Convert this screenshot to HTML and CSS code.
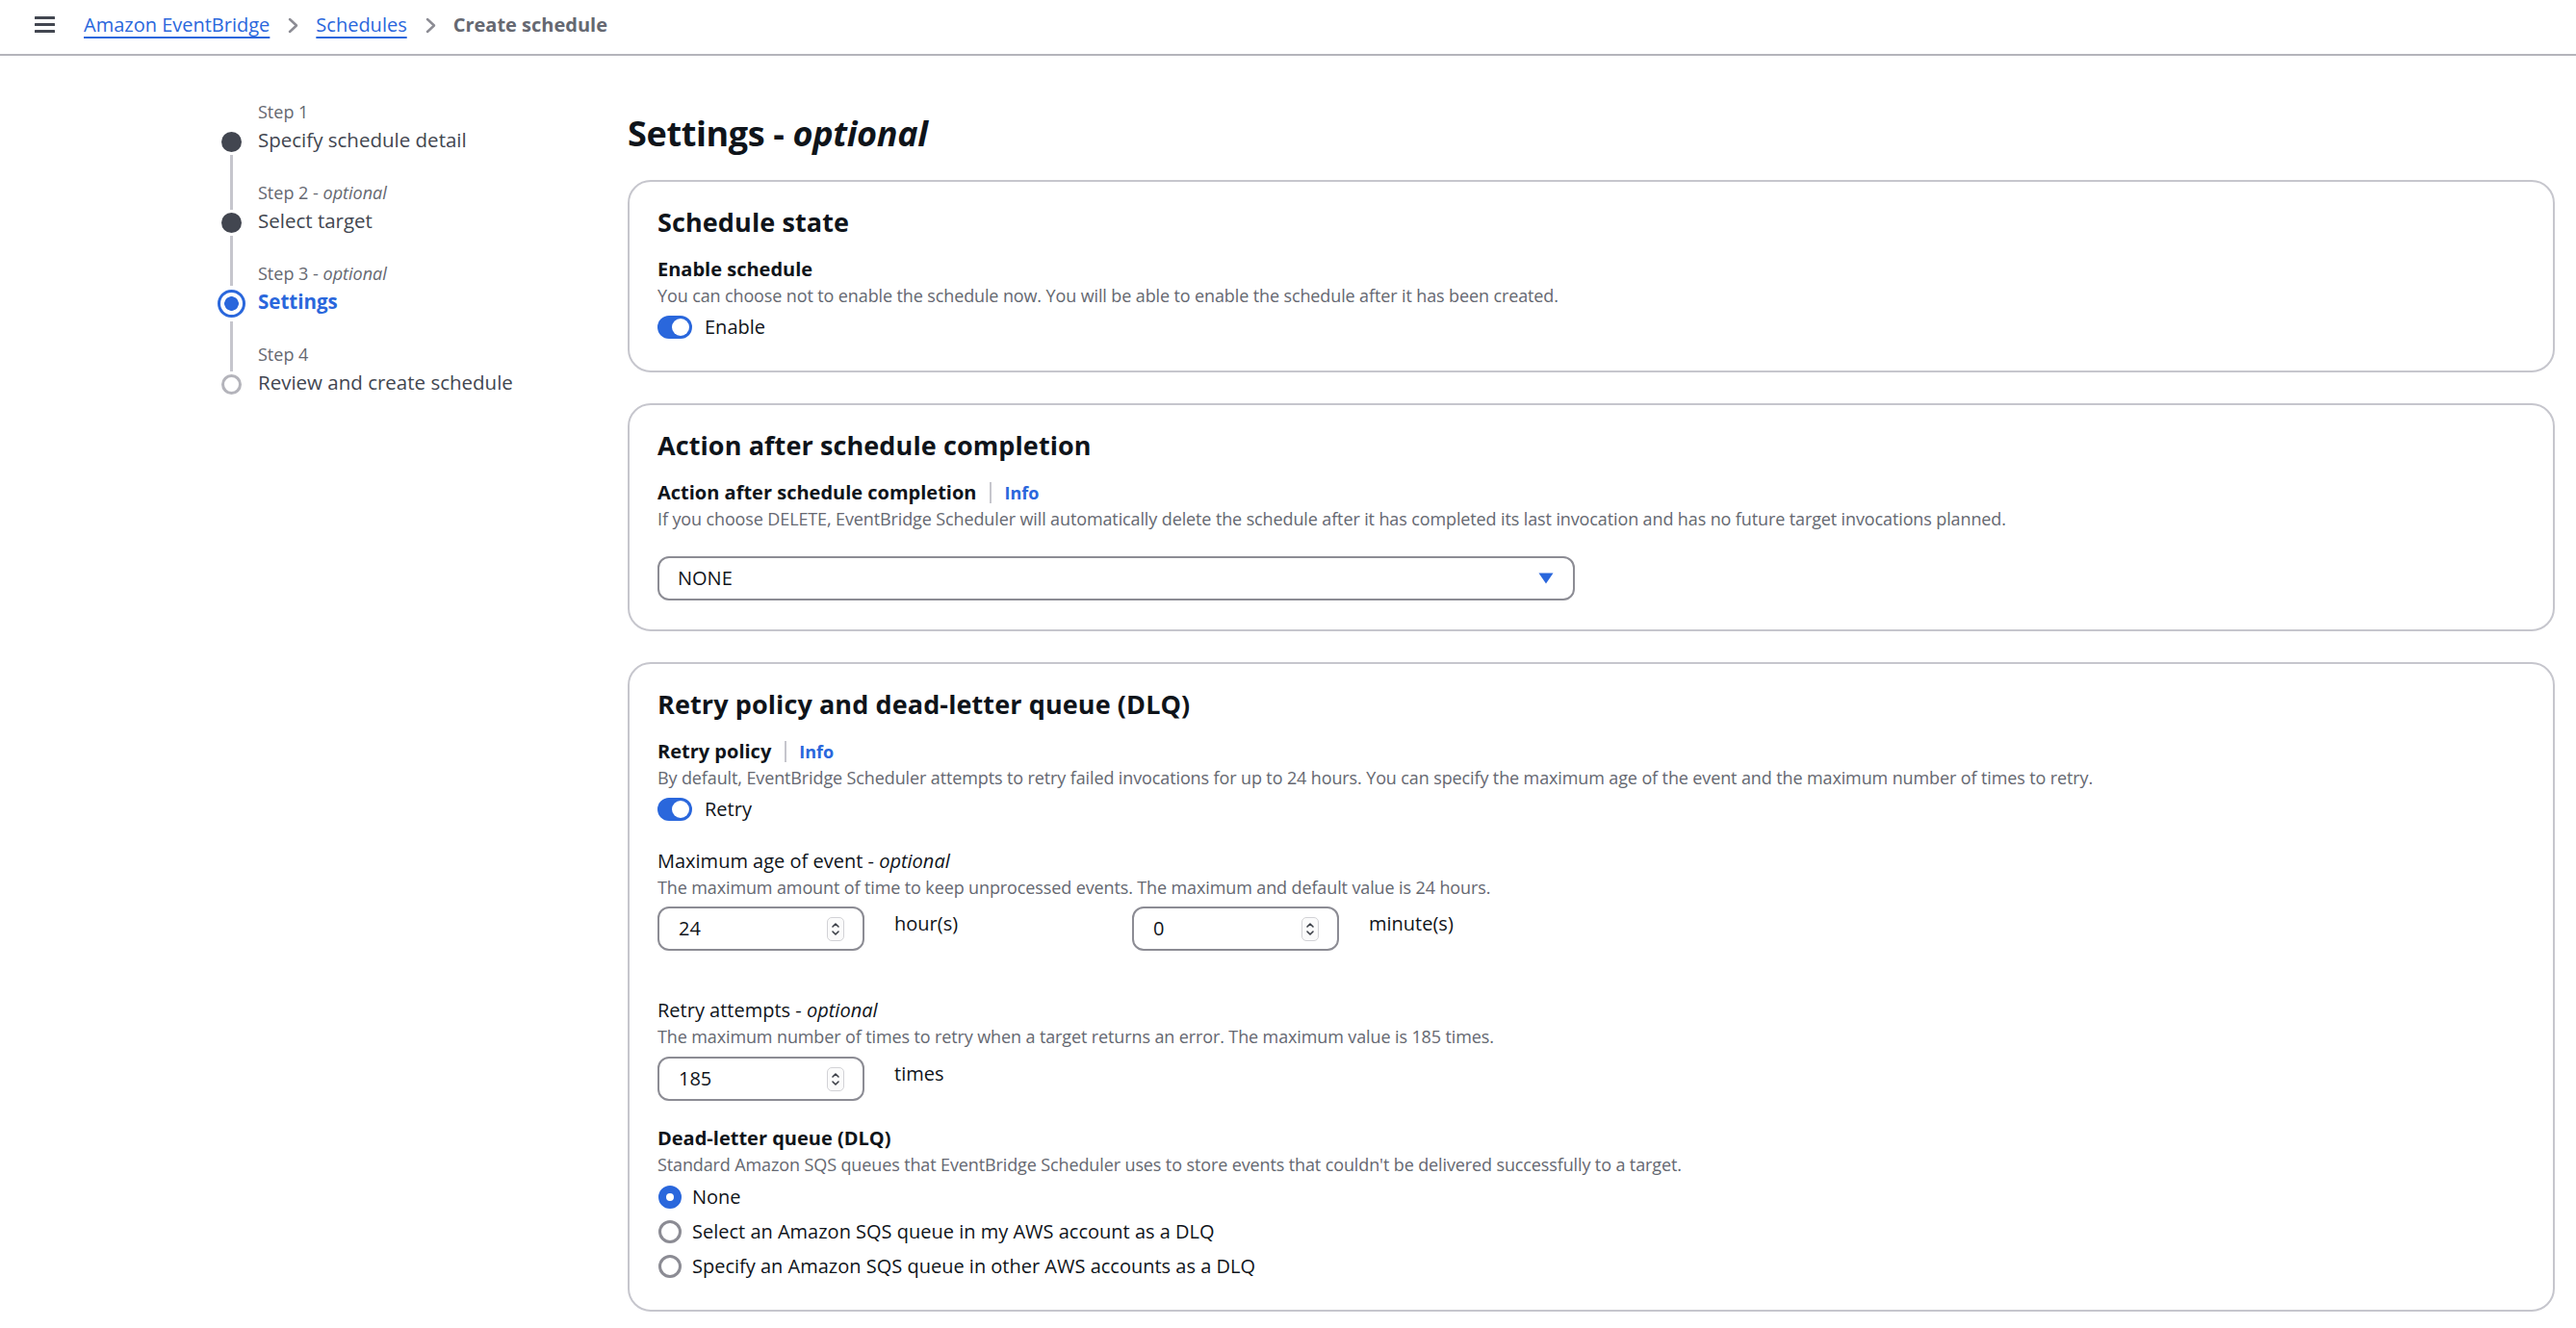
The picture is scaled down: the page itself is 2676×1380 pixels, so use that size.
FILE: index.html
```html
<!DOCTYPE html>
<html lang="en">
<head>
<meta charset="utf-8">
<title>Create schedule</title>
<link rel="stylesheet" href="styles.css">
</head>
<body>
<header class="topbar">
  <button class="menu-btn" aria-label="Open navigation">
    <svg width="21" height="17" viewBox="0 0 21 17"><rect x="0" y="0" width="21" height="3" rx="0.5"/><rect x="0" y="7" width="21" height="3" rx="0.5"/><rect x="0" y="14" width="21" height="3" rx="0.5"/></svg>
  </button>
  <nav class="crumbs" aria-label="Breadcrumbs">
    <a class="crumb-link" href="#">Amazon EventBridge</a>
    <svg class="crumb-sep" width="15" height="17" viewBox="0 0 15 17"><polyline points="4,2 11,8.5 4,15" /></svg>
    <a class="crumb-link" href="#">Schedules</a>
    <svg class="crumb-sep" width="15" height="17" viewBox="0 0 15 17"><polyline points="4,2 11,8.5 4,15" /></svg>
    <span class="crumb-current">Create schedule</span>
  </nav>
</header>

<div class="layout">
  <aside class="steps">
    <ol class="step-list">
      <li class="step done first">
        <div class="rail"><span class="seg seg-top"></span><span class="dot"></span><span class="seg seg-bottom"></span></div>
        <div class="step-text"><div class="step-label">Step 1</div><div class="step-title">Specify schedule detail</div></div>
      </li>
      <li class="step done">
        <div class="rail"><span class="seg seg-top"></span><span class="dot"></span><span class="seg seg-bottom"></span></div>
        <div class="step-text"><div class="step-label">Step 2 - <i>optional</i></div><div class="step-title">Select target</div></div>
      </li>
      <li class="step active">
        <div class="rail"><span class="seg seg-top"></span><span class="dot"></span><span class="seg seg-bottom"></span></div>
        <div class="step-text"><div class="step-label">Step 3 - <i>optional</i></div><div class="step-title">Settings</div></div>
      </li>
      <li class="step todo last">
        <div class="rail"><span class="seg seg-top"></span><span class="dot"></span><span class="seg seg-bottom"></span></div>
        <div class="step-text"><div class="step-label">Step 4</div><div class="step-title">Review and create schedule</div></div>
      </li>
    </ol>
  </aside>

  <main class="main">
    <h1 class="page-title">Settings - <i>optional</i></h1>

    <div class="card-stack">
      <section class="card">
        <h2 class="card-title">Schedule state</h2>
        <div class="field">
          <div class="field-label">Enable schedule</div>
          <div class="field-desc">You can choose not to enable the schedule now. You will be able to enable the schedule after it has been created.</div>
          <div class="toggle-row"><span class="toggle"><span class="knob"></span></span><span>Enable</span></div>
        </div>
      </section>

      <section class="card">
        <h2 class="card-title">Action after schedule completion</h2>
        <div class="field">
          <div class="field-label">Action after schedule completion<span class="info-sep"></span><a class="info" href="#">Info</a></div>
          <div class="field-desc">If you choose DELETE, EventBridge Scheduler will automatically delete the schedule after it has completed its last invocation and has no future target invocations planned.</div>
          <div class="select">
            <span>NONE</span>
            <svg width="16" height="12" viewBox="0 0 16 12"><polygon points="0.5,0.5 15.5,0.5 8,11.5" /></svg>
          </div>
        </div>
      </section>

      <section class="card">
        <h2 class="card-title">Retry policy and dead-letter queue (DLQ)</h2>
        <div class="field">
          <div class="field-label">Retry policy<span class="info-sep"></span><a class="info" href="#">Info</a></div>
          <div class="field-desc">By default, EventBridge Scheduler attempts to retry failed invocations for up to 24 hours. You can specify the maximum age of the event and the maximum number of times to retry.</div>
          <div class="toggle-row"><span class="toggle"><span class="knob"></span></span><span>Retry</span></div>
        </div>

        <div class="field field-age">
          <div class="field-label plain">Maximum age of event - <i>optional</i></div>
          <div class="field-desc">The maximum amount of time to keep unprocessed events. The maximum and default value is 24 hours.</div>
          <div class="num-row">
            <div class="num-group">
              <div class="numbox"><span class="num-value">24</span><span class="spinner"><svg width="16" height="23" viewBox="0 0 16 23"><polyline points="5,9 8,6 11,9"/><polyline points="5,14 8,17 11,14"/></svg></span></div>
              <span class="num-unit">hour(s)</span>
            </div>
            <div class="num-group">
              <div class="numbox"><span class="num-value">0</span><span class="spinner"><svg width="16" height="23" viewBox="0 0 16 23"><polyline points="5,9 8,6 11,9"/><polyline points="5,14 8,17 11,14"/></svg></span></div>
              <span class="num-unit">minute(s)</span>
            </div>
          </div>
        </div>

        <div class="field field-attempts">
          <div class="field-label plain">Retry attempts - <i>optional</i></div>
          <div class="field-desc">The maximum number of times to retry when a target returns an error. The maximum value is 185 times.</div>
          <div class="num-row">
            <div class="num-group">
              <div class="numbox"><span class="num-value">185</span><span class="spinner"><svg width="16" height="23" viewBox="0 0 16 23"><polyline points="5,9 8,6 11,9"/><polyline points="5,14 8,17 11,14"/></svg></span></div>
              <span class="num-unit">times</span>
            </div>
          </div>
        </div>

        <div class="field field-dlq">
          <div class="field-label">Dead-letter queue (DLQ)</div>
          <div class="field-desc">Standard Amazon SQS queues that EventBridge Scheduler uses to store events that couldn't be delivered successfully to a target.</div>
          <div class="radio-group">
            <div class="radio"><span class="radio-dot checked"></span><span>None</span></div>
            <div class="radio"><span class="radio-dot"></span><span>Select an Amazon SQS queue in my AWS account as a DLQ</span></div>
            <div class="radio"><span class="radio-dot"></span><span>Specify an Amazon SQS queue in other AWS accounts as a DLQ</span></div>
          </div>
        </div>
      </section>
    </div>
  </main>
</div>
</body>
</html>
```

FILE: styles.css
```css
* { box-sizing: border-box; }

html, body {
  margin: 0;
  background: #ffffff;
}

body {
  font-family: "Open Sans", "Noto Sans", "Liberation Sans", sans-serif;
  font-size: 20px;
  line-height: 30px;
  color: #0f141a;
}

/* ---------- top bar / breadcrumbs ---------- */
.topbar {
  display: flex;
  align-items: flex-start;
  height: 58px;
  border-bottom: 2px solid #b4b4bb;
  padding: 11px 0 0 36px;
}

.menu-btn {
  display: flex;
  width: 21px;
  height: 17px;
  margin-top: 6px;
  padding: 0;
  border: 0;
  background: none;
}

.menu-btn svg { fill: #424650; }

.crumbs {
  display: flex;
  align-items: flex-start;
  margin-left: 30px;
}

.crumb-link {
  color: #2a67dc;
  text-decoration: underline;
  text-decoration-thickness: 2px;
  text-underline-offset: 5px;
}

.crumb-sep {
  margin: 7px 16px 0 17px;
  fill: none;
  stroke: #8c8c94;
  stroke-width: 2.5;
  stroke-linecap: round;
  stroke-linejoin: round;
}

.crumb-current {
  color: #656871;
  font-weight: 700;
}

/* ---------- layout ---------- */
.layout {
  display: flex;
}

.steps {
  flex: none;
  width: 652px;
  padding: 46px 0 0 225px;
}

.main {
  flex: 1;
  min-width: 0;
  margin-right: 22px;
  padding-top: 58px;
  padding-bottom: 40px;
}

/* ---------- wizard steps ---------- */
.step-list {
  list-style: none;
  margin: 0;
  padding: 0;
}

.step {
  display: flex;
}

.rail {
  flex: none;
  width: 31px;
  margin-right: 12px;
  display: flex;
  flex-direction: column;
  align-items: center;
}

.seg {
  width: 3px;
  background: #c6c6cd;
}

.seg-top {
  height: 30px;
  margin-bottom: 3px;
}

.seg-bottom {
  flex: 1;
  margin-top: 3px;
}

.first .seg-top,
.last .seg-bottom { visibility: hidden; }

.dot {
  flex: none;
  width: 21px;
  height: 21px;
  border-radius: 50%;
}

.done .dot { background: #424650; }

.active .seg-top {
  height: 25px;
  margin-bottom: 4px;
}

.active .dot {
  width: 29px;
  height: 29px;
  border: 3px solid #2a67dc;
  background: radial-gradient(circle, #2a67dc 0, #2a67dc 7px, #ffffff 7.6px);
}

.active .seg-bottom { margin-top: 4px; }

.todo .dot {
  border: 3px solid #b4b4bb;
  background: #ffffff;
}

.step-text { padding-bottom: 28px; }
.last .step-text { padding-bottom: 0; }

.step-label {
  font-size: 18px;
  line-height: 24px;
  color: #656871;
  margin-bottom: 2px;
}

.step-title {
  font-size: 20.5px;
  line-height: 30px;
  color: #424650;
}

.active .step-title {
  color: #2a67dc;
  font-weight: 700;
}

/* ---------- page heading ---------- */
.page-title {
  margin: 0 0 26px;
  font-size: 36px;
  line-height: 45px;
  font-weight: 700;
  letter-spacing: -0.36px;
  color: #0f141a;
}

/* ---------- cards ---------- */
.card-stack {
  display: flex;
  flex-direction: column;
  gap: 32px;
}

.card {
  border: 2px solid #c6c6cd;
  border-radius: 24px;
  padding: 25px 29px 30px;
}

.card-title {
  margin: 0 0 18px;
  font-size: 27px;
  line-height: 33px;
  font-weight: 700;
  letter-spacing: 0.1px;
}

/* ---------- form fields ---------- */
.field-label {
  display: flex;
  align-items: center;
  font-weight: 700;
}

.field-label.plain {
  display: block;
  font-weight: 400;
}

.field-desc {
  font-size: 18px;
  line-height: 24px;
  letter-spacing: -0.12px;
  color: #656871;
}

.info-sep {
  width: 2px;
  height: 22px;
  background: #c6c6cd;
  margin: 0 13px 0 14px;
}

.info {
  font-size: 18px;
  font-weight: 700;
  color: #2a67dc;
  text-decoration: none;
}

.toggle-row {
  display: flex;
  align-items: center;
  gap: 13px;
  margin-top: 6px;
}

.toggle {
  display: flex;
  align-items: center;
  justify-content: flex-end;
  width: 36px;
  height: 24px;
  padding: 3px;
  border-radius: 12px;
  background: #2a67dc;
}

.knob {
  width: 18px;
  height: 18px;
  border-radius: 50%;
  background: #ffffff;
}

.select {
  display: flex;
  align-items: center;
  justify-content: space-between;
  width: 953px;
  height: 46px;
  margin-top: 27px;
  padding: 0 20px 0 19px;
  border: 2px solid #8c8c94;
  border-radius: 12px;
}

.select svg { fill: #2a67dc; }

.field-age { margin-top: 24px; }
.field-attempts { margin-top: 47px; }
.field-dlq { margin-top: 24px; }

.num-row {
  display: flex;
  margin-top: 8px;
}

.field-attempts .num-row { margin-top: 9px; }

.num-group {
  display: flex;
  align-items: flex-start;
  width: 493px;
}

.numbox {
  display: flex;
  align-items: center;
  width: 215px;
  height: 46px;
  padding: 0 19px 0 20px;
  border: 2px solid #8c8c94;
  border-radius: 12px;
}

.num-value {
  flex: 1;
  color: #0f141a;
}

.spinner {
  display: flex;
  width: 18px;
  height: 25px;
  border: 1px solid #d2d2d6;
  border-radius: 5px;
  background: #fbfbfb;
}

.spinner svg {
  fill: none;
  stroke: #3b3f47;
  stroke-width: 1.6;
  stroke-linecap: round;
  stroke-linejoin: round;
}

.num-unit {
  margin-left: 31px;
  padding-top: 3px;
}

.radio-group {
  display: flex;
  flex-direction: column;
  gap: 6px;
  margin-top: 7px;
}

.radio {
  display: flex;
  align-items: center;
  gap: 11px;
}

.radio-dot {
  flex: none;
  width: 24px;
  height: 24px;
  margin-left: 1px;
  border-radius: 50%;
  border: 3px solid #8c8c94;
  background: #ffffff;
}

.radio-dot.checked {
  border: 8px solid #2a67dc;
}
```
